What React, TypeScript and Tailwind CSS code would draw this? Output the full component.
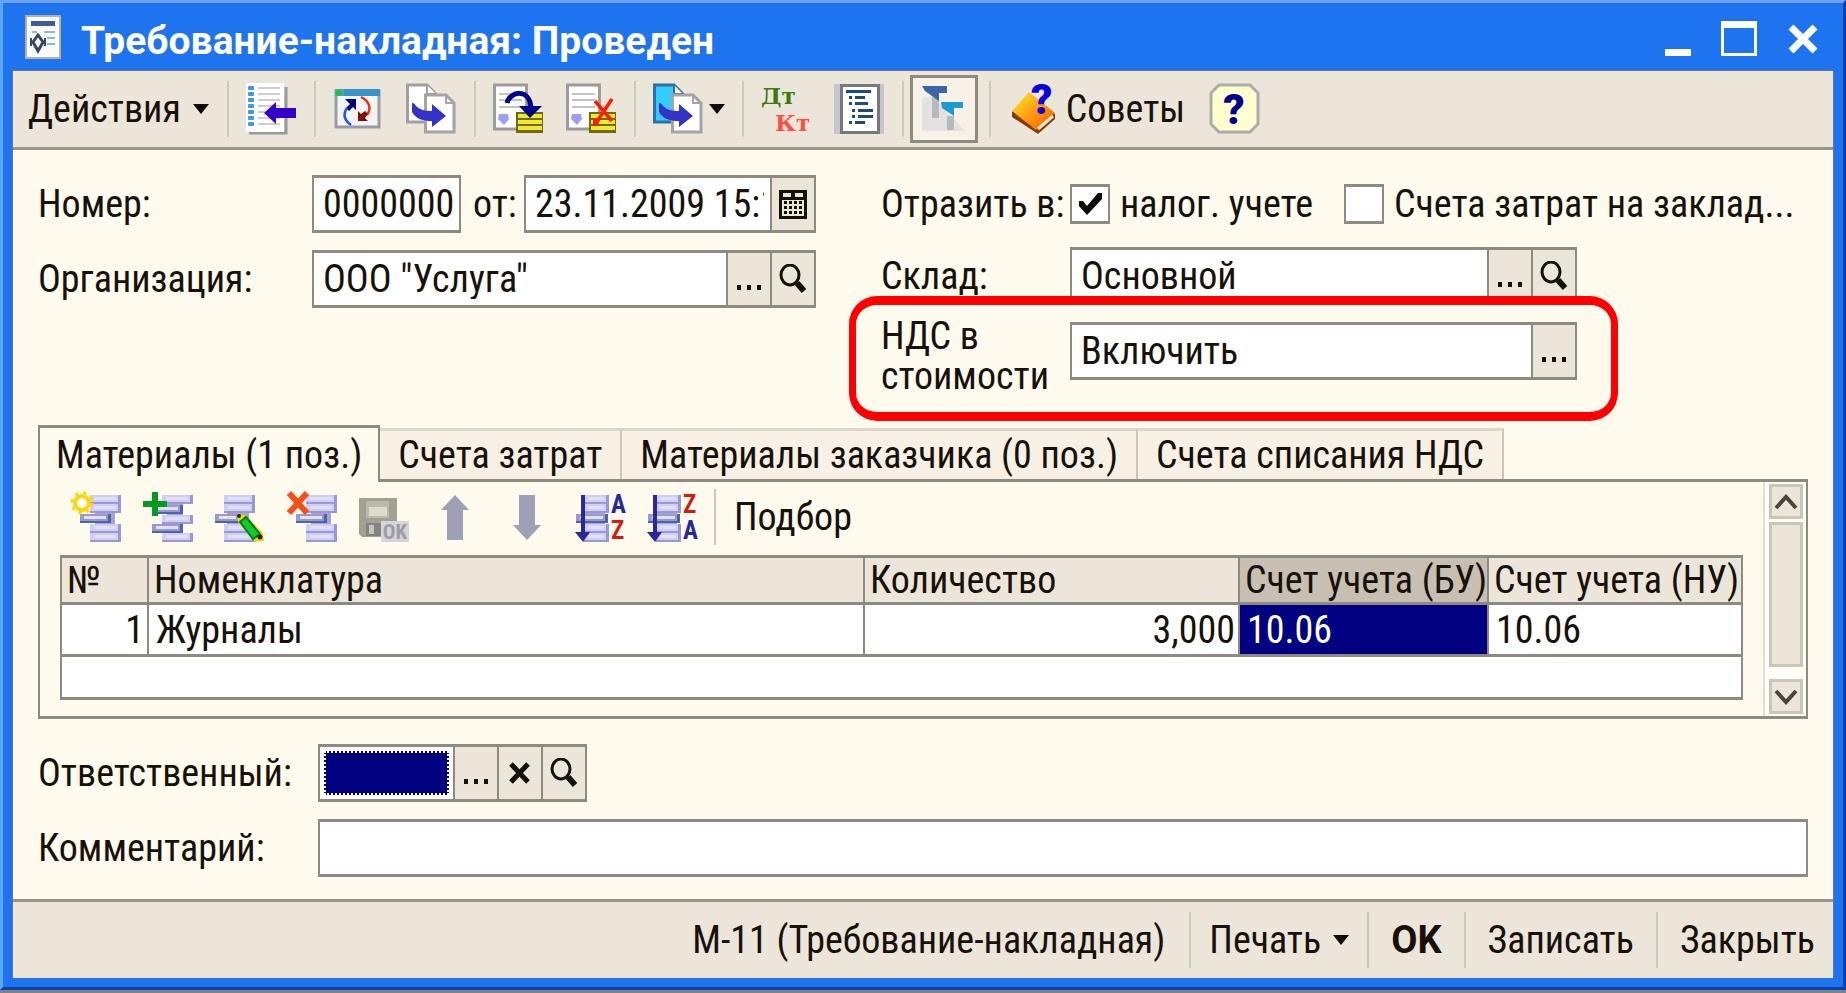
import { type ReactNode, useState } from "react";
import clsx from "clsx";

type IconProps = { children: ReactNode };

const Icon = ({ children }: IconProps) => (
  <svg viewBox="0 0 50 52" className="h-[52px] w-[50px] shrink-0 overflow-visible" aria-hidden="true">
    {children}
  </svg>
);

/* ---------- Toolbar icons ---------- */

const ListIcon = () => (
  <Icon>
    <path d="M3 50h37V4" fill="none" stroke="#9a9a9a" strokeWidth="3" />
    <rect width="38" height="49" fill="#fff" />
    {[5, 11, 17, 23, 29, 35, 41].map((y) => (
      <g key={y}>
        <rect x="2" y={y - 2} width="6" height="4" rx="1" fill="#3f97e8" />
        <rect x="12" y={y - 1} width="22" height="2" fill="#cfcfcf" />
      </g>
    ))}
    <path d="M18 30 30 19v6h20v10H30v6z" fill="#3300cc" />
  </Icon>
);

const RefreshWindowIcon = () => (
  <Icon>
    <rect x="3" y="8" width="43" height="36" fill="#f4f4f4" stroke="#9c9ca4" strokeWidth="3" />
    <rect x="11" y="6" width="36" height="7" fill="#3696cc" />
    <rect x="2" y="6" width="9" height="7" fill="#5d9fc0" />
    <circle cx="6" cy="10" r="3" fill="#17c43a" />
    <path d="M12 16h11v11l-3-3-4 4-3-3 4-4z" fill="#000080" />
    <path d="M14 25c-4 6-3 12 4 17" fill="none" stroke="#1f55f5" strokeWidth="2.5" />
    <path d="M28 14c8 4 11 11 6 18" fill="none" stroke="#f52a12" strokeWidth="2.5" />
    <path d="M25 28v10h10l-3-3 3-4-3-3-4 3z" fill="#7a1208" />
  </Icon>
);

const CopyShapes = ({ fill = "#fff", stroke = "#9f9f9f" }: { fill?: string; stroke?: string }) => (
  <>
    <path d="M1.500 2H21l9 9v28H1.500z" fill={fill} stroke={stroke} strokeWidth="3" />
    <path d="M21 2v9h9" fill="#fff" stroke={stroke} strokeWidth="2" />
    <path d="M19.500 12H40l8 8v29H19.500z" fill="#fff" stroke="#a4a4a4" strokeWidth="3" />
    <path d="M40 12v8h8" fill="none" stroke="#a4a4a4" strokeWidth="2" />
    <path d="M6 20c2 0 3 1 4 3 4 4 9 5 16 5v-7l14 12-14 11v-6C17 38 10 36 6 29z" fill="#3333cc" />
  </>
);

const CopyIcon = () => (
  <Icon>
    <CopyShapes />
  </Icon>
);

const BasedOnIcon = () => (
  <Icon>
    <CopyShapes fill="#33ccff" stroke="#2f6ea6" />
  </Icon>
);

const PostedSheet = () => (
  <>
    <rect x="1.500" y="2" width="32" height="44" fill="#fff" stroke="#9c9c9c" strokeWidth="3" />
    {[10, 16, 23].map((y) => (
      <rect key={y} x="6" y={y} width="23" height="2" fill="#c4c4c4" />
    ))}
    <path d="M6 31h9l1 5-5 6-6-6z" fill="#9d9dfa" />
    <rect x="23" y="29" width="27" height="21" fill="#6d6a10" />
    {[31, 37, 43].map((y) => (
      <rect key={y} x="25" y={y} width="24" height="4" fill="#f4e82c" />
    ))}
  </>
);

const PostIcon = () => (
  <Icon>
    <PostedSheet />
    <path d="M14 20c3-12 22-15 24 4" fill="none" stroke="#000090" strokeWidth="5" />
    <path d="M26 23h23L37 35z" fill="#000090" />
  </Icon>
);

const UnpostIcon = () => (
  <Icon>
    <PostedSheet />
    <path d="M46 16 30 40M29 18l17 20" stroke="#ff1c00" strokeWidth="3.500" />
    <path d="M27 36h7l-2 6h-5z" fill="#ff1c00" />
  </Icon>
);

const DebitCreditIcon = () => (
  <Icon>
    <text x="0" y="21" fill="#3c7a0c" className="font-['DejaVu_Serif',serif] text-[23px] font-bold">
      Дт
    </text>
    <text x="14" y="48" fill="#ff4f42" className="font-['DejaVu_Serif',serif] text-[23px] font-bold">
      Кт
    </text>
  </Icon>
);

const JournalIcon = () => (
  <Icon>
    <rect y="1" width="50" height="50" fill="#c6c6cc" />
    <rect x="7.500" y="2.500" width="37" height="47" fill="#fff" stroke="#77777c" strokeWidth="3" />
    <rect x="12" y="7" width="25" height="3" fill="#1d4a7c" />
    {[
      [15, 13, 10],
      [15, 19, 13],
      [18, 26, 15],
      [18, 32, 15],
      [15, 38, 10],
    ].map(([x, y, w]) => (
      <g key={y} fill="#1d4a7c">
        <rect x={x} y={y} width="3" height="3" />
        <rect x={x + 6} y={y} width={w} height="3" />
      </g>
    ))}
  </Icon>
);

const TypesIcon = () => (
  <Icon>
    <path d="M3 15v33h43L14 13z" fill="#e3e2e0" />
    <path d="M13 14h7v21h-7zM28 33h7v14h-7z" fill="#b9b8ba" />
    <path d="M3 3h25v7h-8v8L6 8z" fill="#3b66a6" />
    <path d="M22 19h22v6h-9v8L23 25z" fill="#1b9ad6" />
  </Icon>
);

const TipsIcon = () => (
  <Icon>
    <defs>
      <linearGradient id="book" x1="0" y1="0" x2="1" y2="1">
        <stop offset="0" stopColor="#fff02a" />
        <stop offset="0.500" stopColor="#ff9d10" />
        <stop offset="1" stopColor="#f25a00" />
      </linearGradient>
    </defs>
    <path d="M20 11 3 29v5l26 17 17-15v-5z" fill="#8a3a08" />
    <path d="M20 9 3 28l24 19 19-17z" fill="url(#book)" />
    <path d="m29 46 15-13" stroke="#ffe9cc" strokeWidth="3" />
    <text x="22" y="31" fill="#0c00e0" className="font-['Roboto',sans-serif] text-[42px] font-black">
      ?
    </text>
  </Icon>
);

const HelpIcon = () => (
  <Icon>
    <path d="M10 2h31l8 8v31l-8 8H10l-8-8V10z" fill="#ffffcf" stroke="#acaca8" strokeWidth="3" />
    <text x="25" y="41" textAnchor="middle" fill="#000090" className="font-['Roboto',sans-serif] text-[42px] font-black">
      ?
    </text>
  </Icon>
);

/* ---------- Table toolbar icons ---------- */

type BarProps = { x: number; y: number; w?: number; current?: boolean };

const Bar = ({ x, y, w = 31, current }: BarProps) => (
  <>
    <rect x={x} y={y} width={w} height="9" fill={current ? "#4767a6" : "#9a98cc"} />
    <rect x={x} y={y} width={w - 3} height="7" fill={current ? "#9a98cc" : "#cfcdfb"} />
    <rect x={x + 4} y={y + 2} width={w - 9} height="3" fill="#e2e1ea" />
  </>
);

const AddIcon = () => (
  <Icon>
    <rect x="24" y="8" width="20" height="40" fill="#a5a3d2" />
    <Bar x={19} y={4} />
    <Bar x={19} y={13} />
    <Bar x={9} y={23} current />
    <Bar x={19} y={33} />
    <Bar x={19} y={42} />
    <circle cx="11" cy="12" r="7" fill="#fff" stroke="#ffd800" strokeWidth="4" />
    <circle cx="11" cy="12" r="10" fill="none" stroke="#ffd800" strokeWidth="3" strokeDasharray="3 5" />
  </Icon>
);

const AddCopyIcon = () => (
  <Icon>
    <rect x="24" y="8" width="16" height="40" fill="#a5a3d2" />
    <Bar x={19} y={4} />
    <Bar x={11} y={14} w={29} current />
    <Bar x={19} y={24} />
    <Bar x={9} y={33} current />
    <Bar x={19} y={42} />
    <path d="M9 1h6v9h9v6h-9v9H9v-9H0v-6h9z" fill="#089a20" />
  </Icon>
);

const EditIcon = () => (
  <Icon>
    <rect x="12" y="8" width="22" height="40" fill="#a5a3d2" />
    <Bar x={9} y={4} />
    <Bar x={9} y={13} />
    <Bar x={0} y={23} w={26} current />
    <Bar x={9} y={33} />
    <Bar x={9} y={42} />
    <path d="m22 23 8 1 18 18 1 8-9 1-17-20z" fill="#f2d60c" />
    <path d="m31 26 14 17-7 5-13-17z" fill="#0fcb2c" stroke="#087a1c" strokeWidth="2" />
    <circle cx="24" cy="25" r="2" fill="#2a2000" />
    <circle cx="45" cy="46" r="2.500" fill="#2a2000" />
  </Icon>
);

const DeleteIcon = () => (
  <Icon>
    <rect x="24" y="8" width="20" height="40" fill="#a5a3d2" />
    <Bar x={19} y={4} />
    <Bar x={19} y={13} />
    <Bar x={9} y={23} current />
    <Bar x={19} y={33} />
    <Bar x={19} y={42} />
    <path d="m2 2 18 20M20 2 2 22" stroke="#f5501c" strokeWidth="6" />
  </Icon>
);

const SaveIcon = () => (
  <Icon>
    <path d="M0 7h38v39H3l-3-3z" fill="#a3a192" />
    <path d="M7 10h23v17H7z" fill="#bdbba6" />
    <path d="M10 16h18v9H10z" fill="#dcdccc" />
    <path d="M7 32h16v13H7z" fill="#828282" />
    <path d="M10 34h5v9h-5z" fill="#c4c4c4" />
    <rect x="22" y="30" width="28" height="21" fill="#d5d5d8" />
    <text x="36" y="48" textAnchor="middle" fill="#9c9ca8" className="font-['Roboto_Condensed','Roboto',sans-serif] text-[21px] font-bold">
      OK
    </text>
  </Icon>
);

const MoveUpIcon = () => (
  <Icon>
    <path d="m24 4 14 15h-6v30H16V19h-6z" fill="#9f9fb6" />
  </Icon>
);

const MoveDownIcon = () => (
  <Icon>
    <path d="M24 49 10 34h6V4h16v30h6z" fill="#9f9fb6" />
  </Icon>
);

const SortIcon = ({ from, to }: { from: "A" | "Z"; to: "A" | "Z" }) => (
  <Icon>
    <rect x="10" y="8" width="20" height="40" fill="#a5a3d2" />
    <Bar x={9} y={4} w={25} />
    <Bar x={9} y={13} w={25} />
    <Bar x={1} y={23} w={32} current />
    <Bar x={9} y={33} w={25} />
    <Bar x={9} y={42} w={25} />
    <path d="M6 4h4v37h5l-7 10-8-10h6z" fill="#28289a" />
    {[from, to].map((letter, i) => (
      <text
        key={letter}
        x="36"
        y={i === 0 ? 22 : 48}
        fill={letter === "A" ? "#28289a" : "#d41c0c"}
        className="font-['Roboto_Condensed','Roboto',sans-serif] text-[25px] font-bold"
      >
        {letter}
      </text>
    ))}
  </Icon>
);

/* ---------- Small glyphs ---------- */

const Caret = () => (
  <svg viewBox="0 0 16 10" className="h-[10px] w-4 shrink-0" aria-hidden="true">
    <path d="M0 0h16L8 10z" fill="#0d0a06" />
  </svg>
);

const SearchGlyph = () => (
  <svg viewBox="0 0 28 30" className="h-[30px] w-7" fill="none" stroke="#14100a" aria-hidden="true">
    <ellipse cx="11" cy="11" rx="9" ry="10" strokeWidth="3" />
    <path d="m18 19 7 8" strokeWidth="6" />
  </svg>
);

const CalendarGlyph = () => (
  <svg viewBox="0 0 28 30" className="h-[30px] w-7" aria-hidden="true">
    <path d="M0 1h28v29H0z" fill="#14100a" />
    <path d="M4 4h8v4H4zM16 4h8v4h-8z" fill="#ebe5da" />
    <path d="M3 11h22v16H3z" fill="#ebe5da" />
    {[12, 17, 22].map((y) => (
      <path key={y} d={`M5 ${y}h3v3H5zM10 ${y}h3v3h-3zM15 ${y}h3v3h-3zM20 ${y}h3v3h-3z`} fill="#14100a" />
    ))}
  </svg>
);

const ClearGlyph = () => (
  <svg viewBox="0 0 24 24" className="h-6 w-6" aria-hidden="true">
    <path d="m3 3 17 18M20 3 3 21" stroke="#14100a" strokeWidth="5" />
  </svg>
);

const DotsGlyph = () => (
  <svg viewBox="0 0 28 30" className="h-[30px] w-7" aria-hidden="true">
    <path d="M2 21h4v5H2zM12 21h4v5h-4zM22 21h4v5h-4z" fill="#14100a" />
  </svg>
);

/* ---------- Building blocks ---------- */

const Separator = () => <div className="mx-[6px] h-[56px] w-[2px] shrink-0 bg-[#cdc8bc]" />;

const ToolButton = ({ label, children }: { label: string; children: ReactNode }) => (
  <button type="button" aria-label={label} className="flex h-[60px] w-[73px] shrink-0 items-center justify-center">
    {children}
  </button>
);

const RowButton = ({ label, disabled, children }: { label: string; disabled?: boolean; children: ReactNode }) => (
  <button
    type="button"
    aria-label={label}
    disabled={disabled}
    className="flex h-[56px] w-[72px] shrink-0 items-center justify-center"
  >
    {children}
  </button>
);

const FieldButton = ({ label, children }: { label: string; children: ReactNode }) => (
  <button
    type="button"
    aria-label={label}
    className="flex w-[44px] shrink-0 items-center justify-center border-l-2 border-[#8f8a80] bg-[#ebe5da]"
  >
    {children}
  </button>
);

type FieldProps = { id: string; value: string; className?: string; children?: ReactNode };

const Field = ({ id, value, className, children }: FieldProps) => {
  const [text, setText] = useState(value);
  return (
    <div className={clsx("flex h-[58px] min-w-0 border-x-2 border-y-[3px] border-[#8f8a80] bg-white", className)}>
      <input
        id={id}
        value={text}
        onChange={(e) => setText(e.target.value)}
        className="mr-[6px] ml-[9px] w-0 min-w-0 flex-1 bg-transparent outline-none"
      />
      {children}
    </div>
  );
};

type CheckProps = { label: string; defaultChecked?: boolean };

const Check = ({ label, defaultChecked }: CheckProps) => (
  <label className="flex items-center gap-[10px] whitespace-nowrap">
    <span className="relative flex">
      <input
        type="checkbox"
        defaultChecked={defaultChecked}
        className="peer size-10 appearance-none border-x-2 border-y-[3px] border-[#8f8a80] bg-white"
      />
      <svg viewBox="0 0 40 40" className="absolute inset-0 hidden peer-checked:block" aria-hidden="true">
        <path d="M9 17h4l4 5 11-13h4v6L17 31 9 22z" fill="#0d0a06" />
      </svg>
    </span>
    {label}
  </label>
);

const tabs = ["Материалы (1 поз.)", "Счета затрат", "Материалы заказчика (0 поз.)", "Счета списания НДС"];

export default function App() {
  const [activeTab, setActiveTab] = useState(0);

  return (
    <div className="flex min-h-screen flex-col bg-[#7f8187] pb-[3px] font-['Roboto_Condensed','Roboto',sans-serif] text-[38px] leading-10 text-[#17110a]">
      <div className="flex flex-1 flex-col border-t-[3px] border-r-[3px] border-b-[3px] border-l-[3px] border-t-[#6ea2ee] border-r-[#0a3fb0] border-b-[#0a3fb0] border-l-[#57a8ff] bg-[#1e73ee] px-[9px] pb-[9px]">
        {/* Title bar */}
        <header className="flex h-[67px] items-center pr-[15px] pl-[13px]">
          <svg viewBox="0 0 36 44" className="h-11 w-9 shrink-0" aria-hidden="true">
            <rect x="1" y="1" width="34" height="42" fill="#fbfbf6" stroke="#b4b2a8" strokeWidth="2" />
            <rect x="6" y="6" width="24" height="5" fill="#3c5c94" />
            <path d="M7 17h5M19 17h11M22 23h8M22 29h8" stroke="#9ab4c8" strokeWidth="2" />
            <path d="m13 20 5 7-5 9-5-9z" fill="#fff" stroke="#34466c" strokeWidth="3" />
            <path d="M6 23v8M20 23v8" stroke="#34466c" strokeWidth="2" />
          </svg>
          <h1 className="flex-1 truncate pt-2 pl-5 font-['Roboto',sans-serif] text-[39px] leading-[50px] font-bold text-white">
            Требование-накладная: Проведен
          </h1>
          <div className="flex items-center gap-[30px] pt-1 text-white">
            <button type="button" aria-label="Свернуть" className="flex h-[34px] w-[26px] items-end">
              <svg viewBox="0 0 26 7" className="h-[7px] w-[26px]" aria-hidden="true">
                <path d="M0 0h26v7H0z" fill="currentColor" />
              </svg>
            </button>
            <button
              type="button"
              aria-label="Развернуть"
              className="h-[35px] w-9 border-3 border-t-[7px] border-white"
            />
            <button type="button" aria-label="Закрыть окно">
              <svg viewBox="0 0 32 30" className="h-[30px] w-8" aria-hidden="true">
                <path d="m4 3 24 24M28 3 4 27" stroke="currentColor" strokeWidth="7" />
              </svg>
            </button>
          </div>
        </header>

        <div className="flex flex-1 flex-col border-x border-t border-[#6c6e8c] bg-[#fffaee]">
          {/* Main toolbar */}
          <div className="flex h-[79px] shrink-0 items-center border-b-[3px] border-[#9a958a] bg-[#ebe5da] pl-[15px]">
            <button type="button" className="flex items-center gap-3 pr-[12px]">
              Действия
              <Caret />
            </button>
            <Separator />
            <ToolButton label="Перейти к списку"><ListIcon /></ToolButton>
            <Separator />
            <ToolButton label="Перечитать"><RefreshWindowIcon /></ToolButton>
            <ToolButton label="Скопировать"><CopyIcon /></ToolButton>
            <Separator />
            <ToolButton label="Провести"><PostIcon /></ToolButton>
            <ToolButton label="Отмена проведения"><UnpostIcon /></ToolButton>
            <Separator />
            <button type="button" aria-label="Ввести на основании" className="flex w-[94px] shrink-0 items-center gap-[6px] pl-[11px]">
              <BasedOnIcon />
              <Caret />
            </button>
            <Separator />
            <ToolButton label="Проводки"><DebitCreditIcon /></ToolButton>
            <ToolButton label="Журнал"><JournalIcon /></ToolButton>
            <Separator />
            <button
              type="button"
              aria-label="Типы"
              aria-pressed="true"
              className="mr-[5px] flex size-[68px] shrink-0 items-center justify-center border-3 border-[#8f8a80] bg-[#f7f1e6]"
            >
              <TypesIcon />
            </button>
            <Separator />
            <button type="button" className="flex items-center gap-[7px] px-[12px]">
              <TipsIcon />
              Советы
            </button>
            <ToolButton label="Справка"><HelpIcon /></ToolButton>
          </div>

          <form className="flex flex-1 flex-col px-[25px] pt-[25px] pb-5" onSubmit={(e) => e.preventDefault()}>
            {/* Document header */}
            <div className="flex gap-[65px]">
              <div className="flex w-[778px] shrink-0 flex-col gap-[17px]">
                <div className="flex items-center">
                  <label htmlFor="number" className="w-[274px] shrink-0">Номер:</label>
                  <Field id="number" value="0000000" className="w-[149px] shrink-0" />
                  <label htmlFor="date" className="w-[63px] shrink-0 pl-3">от:</label>
                  <Field id="date" value="23.11.2009 15:1" className="flex-1">
                    <FieldButton label="Календарь"><CalendarGlyph /></FieldButton>
                  </Field>
                </div>
                <div className="flex items-center">
                  <label htmlFor="org" className="w-[274px] shrink-0">Организация:</label>
                  <Field id="org" value={'ООО "Услуга"'} className="flex-1">
                    <FieldButton label="Выбрать организацию"><DotsGlyph /></FieldButton>
                    <FieldButton label="Открыть организацию"><SearchGlyph /></FieldButton>
                  </Field>
                </div>
              </div>

              <div className="flex min-w-0 flex-1 flex-col">
                <div className="flex h-[58px] items-center">
                  <span className="w-[189px] shrink-0 whitespace-nowrap">Отразить в:</span>
                  <div className="flex gap-[31px]">
                    <Check label="налог. учете" defaultChecked />
                    <Check label="Счета затрат на заклад..." />
                  </div>
                </div>
                <div className="mt-[14px] flex items-center">
                  <label htmlFor="store" className="w-[189px] shrink-0">Склад:</label>
                  <Field id="store" value="Основной" className="w-[507px]">
                    <FieldButton label="Выбрать склад"><DotsGlyph /></FieldButton>
                    <FieldButton label="Открыть склад"><SearchGlyph /></FieldButton>
                  </Field>
                </div>
                <div className="relative mt-[11px] flex items-start">
                  <label htmlFor="vat" className="w-[189px] shrink-0">
                    НДС в
                    <br />
                    стоимости
                  </label>
                  <div className="pt-[6px]">
                    <Field id="vat" value="Включить" className="w-[507px]">
                      <FieldButton label="Выбрать"><DotsGlyph /></FieldButton>
                    </Field>
                  </div>
                  <div className="pointer-events-none absolute -top-5 -left-8 h-[125px] w-[769px] rounded-[28px] border-x-[7px] border-y-[9px] border-[#ff0000]" />
                </div>
              </div>
            </div>

            {/* Tabs */}
            <div role="tablist" className="mt-[29px] flex items-end">
              {tabs.map((tab, i) => (
                <button
                  key={tab}
                  type="button"
                  role="tab"
                  aria-selected={i === activeTab}
                  onClick={() => setActiveTab(i)}
                  className={clsx(
                    "whitespace-nowrap",
                    i === activeTab
                      ? "relative -mb-[3px] h-[57px] border-x-2 border-t-[3px] border-[#8f8a80] bg-[#fffaee] px-4"
                      : "h-[51px] border-t-[3px] border-r-2 border-t-[#ddd6c9] border-r-[#cdc7ba] bg-[#f6f0e5] px-[18px]"
                  )}
                >
                  {tab}
                </button>
              ))}
            </div>

            <div className="flex border-x-2 border-y-[3px] border-[#8f8a80]">
              <div className="min-w-0 flex-1 pt-[7px] pr-5 pb-[16px] pl-5">
                <div className="flex items-center">
                  <RowButton label="Добавить"><AddIcon /></RowButton>
                  <RowButton label="Добавить копированием"><AddCopyIcon /></RowButton>
                  <RowButton label="Изменить"><EditIcon /></RowButton>
                  <RowButton label="Удалить"><DeleteIcon /></RowButton>
                  <RowButton label="Закончить редактирование" disabled><SaveIcon /></RowButton>
                  <RowButton label="Переместить вверх" disabled><MoveUpIcon /></RowButton>
                  <RowButton label="Переместить вниз" disabled><MoveDownIcon /></RowButton>
                  <RowButton label="Сортировать по возрастанию"><SortIcon from="A" to="Z" /></RowButton>
                  <RowButton label="Сортировать по убыванию"><SortIcon from="Z" to="A" /></RowButton>
                  <Separator />
                  <button type="button" className="px-3">Подбор</button>
                </div>

                <div className="mt-[10px] border-x-2 border-y-[3px] border-[#8f8a80] bg-white">
                  <table className="w-full table-fixed border-separate border-spacing-0 text-left">
                    <colgroup>
                      <col className="w-[87px]" />
                      <col />
                      <col className="w-[375px]" />
                      <col className="w-[249px]" />
                      <col className="w-[252px]" />
                    </colgroup>
                    <thead>
                      <tr className="h-[47px] bg-[#ebe5da] [&>th]:border-b-[3px] [&>th]:border-[#8f8a80] [&>th]:p-0 [&>th]:pl-[5px] [&>th]:font-normal [&>th]:whitespace-nowrap [&>th:not(:last-child)]:border-r-2">
                        <th>№</th>
                        <th>Номенклатура</th>
                        <th>Количество</th>
                        <th className="bg-[#c6bfb2]">Счет учета (БУ)</th>
                        <th>Счет учета (НУ)</th>
                      </tr>
                    </thead>
                    <tbody>
                      <tr className="h-[52px] [&>td]:border-b-[3px] [&>td]:border-[#8f8a80] [&>td]:py-0 [&>td]:pr-[3px] [&>td]:pl-[7px] [&>td:nth-child(-n+3)]:border-r-2">
                        <td className="text-right">1</td>
                        <td>Журналы</td>
                        <td className="text-right">3,000</td>
                        <td className="border-r-2 bg-[#000080] text-white">10.06</td>
                        <td>10.06</td>
                      </tr>
                    </tbody>
                  </table>
                  <div className="h-10" />
                </div>
              </div>

              {/* Panel scrollbar */}
              <div className="flex w-[43px] shrink-0 flex-col items-center border-l-2 border-[#e4dfd2] bg-[#fffdf8] py-[2px]">
                <button type="button" aria-label="Прокрутить вверх" className="flex h-[35px] w-[34px] items-center justify-center border-3 border-[#cbc5b8] bg-[#ebe5da]">
                  <svg viewBox="0 0 24 16" className="h-4 w-6" aria-hidden="true">
                    <path d="m2 14 10-11 10 11" fill="none" stroke="#4a453c" strokeWidth="4" />
                  </svg>
                </button>
                <div className="mt-[3px] mb-[12px] w-[34px] flex-1 border-3 border-[#cbc5b8] bg-[#ebe5da]" />
                <button type="button" aria-label="Прокрутить вниз" className="flex h-[35px] w-[34px] items-center justify-center border-3 border-[#cbc5b8] bg-[#ebe5da]">
                  <svg viewBox="0 0 24 16" className="h-4 w-6" aria-hidden="true">
                    <path d="m2 2 10 11L22 2" fill="none" stroke="#4a453c" strokeWidth="4" />
                  </svg>
                </button>
              </div>
            </div>

            {/* Document footer fields */}
            <div className="mt-[25px] flex items-center">
              <label htmlFor="responsible" className="w-[280px] shrink-0">Ответственный:</label>
              <div className="flex h-[58px] border-x-2 border-y-[3px] border-[#8f8a80] bg-white">
                <input
                  id="responsible"
                  defaultValue=""
                  className="m-[4px] w-[125px] border-2 border-dotted border-white bg-[#000080] outline-none"
                />
                <FieldButton label="Выбрать ответственного"><DotsGlyph /></FieldButton>
                <FieldButton label="Очистить"><ClearGlyph /></FieldButton>
                <FieldButton label="Открыть ответственного"><SearchGlyph /></FieldButton>
              </div>
            </div>
            <div className="mt-[17px] flex items-center">
              <label htmlFor="comment" className="w-[280px] shrink-0">Комментарий:</label>
              <Field id="comment" value="" className="flex-1" />
            </div>
          </form>

          {/* Bottom command bar */}
          <footer className="flex h-[79px] shrink-0 items-center justify-end border-t-[3px] border-[#9a958a] bg-[#ebe5da] pr-[2px]">
            <button type="button" className="px-[18px]">М-11 (Требование-накладная)</button>
            <Separator />
            <button type="button" className="flex items-center gap-3 px-3">
              Печать
              <Caret />
            </button>
            <Separator />
            <button type="button" className="px-4 font-['Roboto',sans-serif] font-bold">OK</button>
            <Separator />
            <button type="button" className="px-4">Записать</button>
            <Separator />
            <button type="button" className="px-4">Закрыть</button>
          </footer>
        </div>
      </div>
    </div>
  );
}
